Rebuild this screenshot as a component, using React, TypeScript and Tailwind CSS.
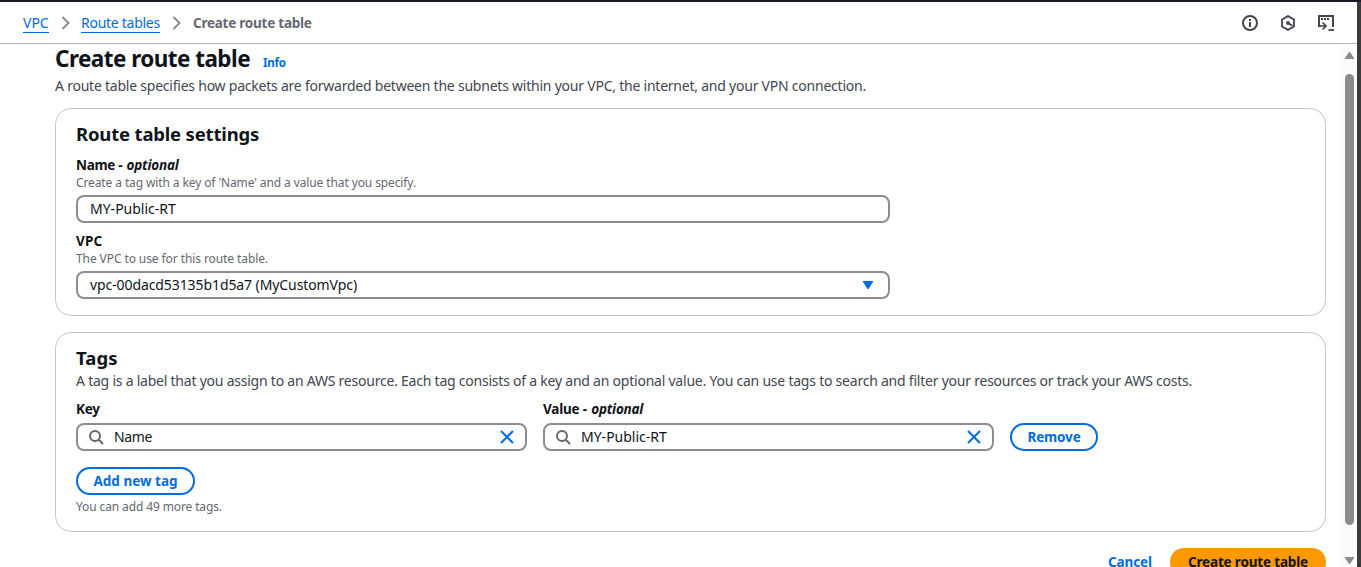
import type { ReactNode } from "react";

function Chevron() {
  return (
    <svg width="10" height="14" viewBox="0 0 10 14" fill="none" stroke="#8c8c94" strokeWidth="2" className="mt-px">
      <path d="M1.5 1 L7.5 7 L1.5 13" />
    </svg>
  );
}

function SearchIcon() {
  return (
    <svg width="16" height="16" viewBox="0 0 16 16" fill="none" stroke="#656871" strokeWidth="2" className="shrink-0">
      <circle cx="7" cy="7" r="5" />
      <path d="m15 15-4.5-4.5" />
    </svg>
  );
}

function CloseIcon() {
  return (
    <svg width="16" height="16" viewBox="0 0 16 16" fill="none" stroke="#006ce0" strokeWidth="2" className="ml-auto shrink-0">
      <path d="m2 2 12 12M14 2 2 14" />
    </svg>
  );
}

function HeaderIcons() {
  return (
    <div className="flex items-center gap-[22px]">
      <svg width="16" height="16" viewBox="0 0 16 16" fill="none" stroke="#424650" strokeWidth="2">
        <circle cx="8" cy="8" r="7" />
        <path d="M8 12V7M8 6V4" />
      </svg>
      <svg width="16" height="16" viewBox="0 0 16 16" fill="none" stroke="#424650" strokeWidth="1.800">
        <path d="M8 1.100 14 4.500v7l-6 3.400-6-3.400v-7z" />
        <path d="m8 8 4.500 2.700" />
        <circle cx="8" cy="8" r="1.900" fill="#424650" stroke="none" />
      </svg>
      <svg width="16" height="16" viewBox="0 0 16 16" fill="none" stroke="#424650" strokeWidth="2">
        <path d="M3 11H1V1h14v11" />
        <path d="M3 4h2M6 4h2M9 4h2" strokeWidth="1.800" />
        <path d="M3 11h4.500M4.500 7.500 8 11l-3.500 3.500" strokeWidth="1.700" />
        <path d="M10.500 15H16" strokeWidth="1.800" />
      </svg>
    </div>
  );
}

function Card({ className, children }: { className: string; children: ReactNode }) {
  return <section className={`rounded-[16px] border border-[#c6c6cd] bg-white px-5 ${className}`}>{children}</section>;
}

function TagInput({ value, className }: { value: string; className: string }) {
  return (
    <div className="flex h-7 w-[451px] items-center rounded-[8px] border-2 border-[#8c8c94] px-[10px]">
      <SearchIcon />
      <span className={`ml-[10px] ${className}`}>{value}</span>
      <CloseIcon />
    </div>
  );
}

function Optional() {
  return <em className="ml-px tracking-[-0.2px]">optional</em>;
}

export default function App() {
  return (
    <div className="flex h-[567px] w-[1361px] flex-col overflow-hidden bg-white font-['Noto_Sans',sans-serif] text-[14px] leading-5 whitespace-nowrap text-[#0f141a]">
      <div className="h-[2px] shrink-0 bg-[#161d26]" />
      <div className="flex min-h-0 flex-1">
        <div className="flex min-w-0 flex-1 flex-col">
          <header className="flex h-[42px] shrink-0 items-center border-b border-[#b4b4bb] px-[23px]">
            <nav className="flex flex-1 items-center">
              <a className="w-[26px] border-b border-[#006ce0] leading-[19px] text-[#006ce0]">VPC</a>
              <span className="mr-[10px] ml-[12px]"><Chevron /></span>
              <a className="w-[79px] border-b border-[#006ce0] leading-[19px] tracking-[-0.27px] text-[#006ce0]">Route tables</a>
              <span className="mr-[11px] ml-[12px]"><Chevron /></span>
              <span className="text-[13.5px] font-bold tracking-[-0.24px] text-[#656871]">Create route table</span>
            </nav>
            <HeaderIcons />
          </header>
          <div className="flex min-h-0 flex-1">
            <main className="min-w-0 flex-1 overflow-hidden pr-4 pl-[55px]">
              <div className="flex h-[32px] items-baseline">
                <h1 className="text-[22.5px] leading-[29px] font-bold tracking-[-0.55px]">Create route table</h1>
                <a className="ml-[13px] text-[11.5px] font-bold tracking-[-0.2px] text-[#006ce0]">Info</a>
              </div>
              <p className="h-8 tracking-[-0.228px] text-[#424650]">
                A route table specifies how packets are forwarded between the subnets within your VPC, the internet, and your VPN connection.
              </p>

              <Card className="h-[208px] pt-[13px]">
                <h2 className="text-[18.5px] leading-6 font-bold tracking-[-0.18px]">Route table settings</h2>
                <div className="mt-[9px] text-[13.5px] font-bold tracking-[-0.3px]">Name - <Optional /></div>
                <div className="text-[12px] leading-4 tracking-[-0.11px] text-[#656871]">Create a tag with a key of 'Name' and a value that you specify.</div>
                <div className="mt-1 flex h-7 w-[814px] items-center rounded-[8px] border-2 border-[#8c8c94] px-3">MY-Public-RT</div>
                <div className="mt-2 text-[13.5px] font-bold tracking-[0.2px]">VPC</div>
                <div className="text-[12px] leading-4 tracking-[-0.09px] text-[#656871]">The VPC to use for this route table.</div>
                <div className="mt-1 flex h-7 w-[814px] items-center justify-between rounded-[8px] border-2 border-[#8c8c94] pr-[15px] pl-3">
                  <span className="tracking-[-0.09px]">vpc-00dacd53135b1d5a7 (MyCustomVpc)</span>
                  <svg width="10" height="8" viewBox="0 0 10 8" fill="#006ce0"><path d="M0 0h10v1L5.500 8h-1L0 1z" /></svg>
                </div>
              </Card>

              <Card className="mt-4 h-[200px] pt-[13px]">
                <h2 className="text-[18.5px] leading-6 font-bold tracking-[0.1px]">Tags</h2>
                <p className="mt-px tracking-[-0.228px] text-[#424650]">
                  A tag is a label that you assign to an AWS resource. Each tag consists of a key and an optional value. You can use tags to search and filter your resources or track your AWS costs.
                </p>
                <div className="mt-2 flex items-end gap-4">
                  <div>
                    <div className="mb-1 text-[13.5px] font-bold tracking-[-0.2px]">Key</div>
                    <TagInput value="Name" className="tracking-[-0.35px]" />
                  </div>
                  <div>
                    <div className="mb-1 text-[13.5px] font-bold tracking-[-0.2px]">Value - <Optional /></div>
                    <TagInput value="MY-Public-RT" className="tracking-normal" />
                  </div>
                  <button className="h-7 w-[88px] rounded-full border-2 border-[#006ce0] text-[13.5px] leading-6 font-bold tracking-[-0.15px] text-[#006ce0]">Remove</button>
                </div>
                <button className="mt-4 block h-7 w-[119px] rounded-full border-2 border-[#006ce0] text-[13.5px] leading-6 font-bold text-[#006ce0]">Add new tag</button>
                <div className="mt-1 text-[12px] leading-4 tracking-[-0.12px] text-[#656871]">You can add 49 more tags.</div>
              </Card>

              <div className="mt-4 flex justify-end">
                <button className="h-7 px-[18px] text-[13.5px] leading-7 font-bold tracking-[-0.1px] text-[#006ce0]">Cancel</button>
                <button className="h-7 w-[156px] rounded-full bg-[#ff9900] text-[13.5px] leading-7 font-bold tracking-[-0.17px] text-[#0f141a]">Create route table</button>
              </div>
            </main>
            <div className="flex w-[15px] flex-col items-center bg-[#fcfcfc] pt-2">
              <svg width="9" height="7" viewBox="0 0 9 7" fill="#8b8b8b"><path d="M4 0h1l4 6v1H0V6z" /></svg>
              <div className="mt-[15px] h-[451px] w-[9px] rounded-full bg-[#8b8b8b]" />
              <svg className="mt-8" width="9" height="7" viewBox="0 0 9 7" fill="#8b8b8b"><path d="M4 7h1l4-6V0H0v1z" /></svg>
            </div>
          </div>
        </div>
        <div className="w-1 shrink-0 bg-[#3b3b3b]" />
      </div>
    </div>
  );
}
